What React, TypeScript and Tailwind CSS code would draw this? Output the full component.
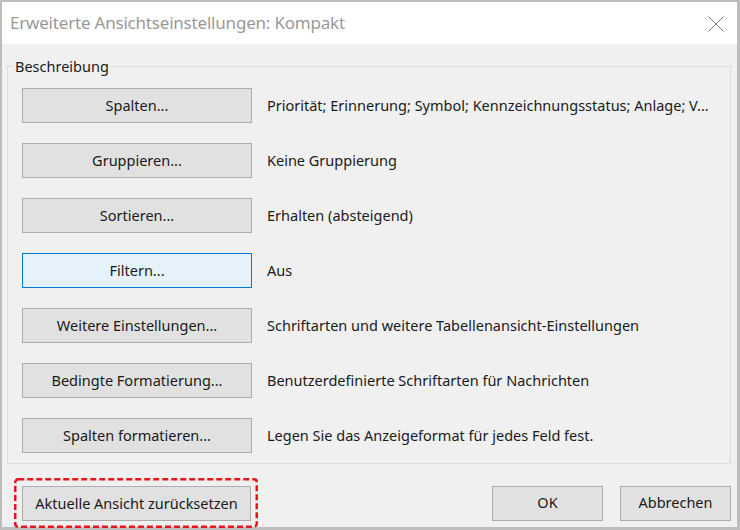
import React from "react";

const rows: [string, string, boolean?][] = [
  ["Spalten...", "Priorität; Erinnerung; Symbol; Kennzeichnungsstatus; Anlage; V..."],
  ["Gruppieren...", "Keine Gruppierung"],
  ["Sortieren...", "Erhalten (absteigend)"],
  ["Filtern...", "Aus", true],
  ["Weitere Einstellungen...", "Schriftarten und weitere Tabellenansicht-Einstellungen"],
  ["Bedingte Formatierung...", "Benutzerdefinierte Schriftarten für Nachrichten"],
  ["Spalten formatieren...", "Legen Sie das Anzeigeformat für jedes Feld fest."],
];

function Btn({ label, hot, w }: { label: string; hot?: boolean; w: string }) {
  return (
    <div
      className={`${w} h-[35px] flex items-center justify-center border text-[14.5px] text-[#1a1a1a] ${
        hot ? "bg-[#e5f1fb] border-[#0078d7]" : "bg-[#e1e1e1] border-[#adadad]"
      }`}
    >
      {label}
    </div>
  );
}

export default function App() {
  return (
    <div
      className="w-[740px] h-[530px] bg-[#bdbdbd] pt-[2px] pl-[2px] pr-[3px] pb-[3px]"
      style={{ fontFamily: '"Noto Sans", "Open Sans", sans-serif' }}
    >
      <div className="w-full h-full flex flex-col bg-[#f0f0f0]">
        <div className="h-[42px] bg-white flex items-center justify-between pl-[8px] pr-[13px] shrink-0">
          <span className="text-[17px] text-[#999999] tracking-[-0.2px]">
            Erweiterte Ansichtseinstellungen: Kompakt
          </span>
          <svg width="16" height="16" viewBox="0 0 16 16" className="mt-[1px]">
            <path d="M0.5 0.5 L15.5 15.5 M15.5 0.5 L0.5 15.5" stroke="#7a7a7a" strokeWidth="1" fill="none" />
          </svg>
        </div>
        <div className="pl-[5px] pr-[6px] pt-[13px]">
          <fieldset className="border border-[#dcdcdc] p-0 m-0">
            <legend className="ml-[6px] px-[1px] text-[14.5px] text-[#1a1a1a] leading-[18px]">Beschreibung</legend>
            <div className="flex flex-col gap-[20px] pl-[14px] pr-[10px] pt-[13px] pb-[10px]">
              {rows.map(([b, d, hot]) => (
                <div key={b} className="flex items-center">
                  <Btn label={b} hot={hot} w="w-[230px]" />
                  <span className="ml-[15px] text-[14.5px] text-[#1a1a1a] whitespace-nowrap">{d}</span>
                </div>
              ))}
            </div>
          </fieldset>
        </div>
        <div className="flex items-center justify-between pl-[12px] pr-[6px] mt-[14px]">
          <div className="relative pl-[8px] pr-[7px] pt-[8px] pb-[7px]">
            <Btn label="Aktuelle Ansicht zurücksetzen" w="w-[229px]" />
            <svg className="absolute inset-0 w-full h-full pointer-events-none" width="244" height="50">
              <rect
                x="1.25"
                y="1.25"
                width="241.5"
                height="47.5"
                rx="3"
                fill="none"
                stroke="#e8141b"
                strokeWidth="2.5"
                strokeDasharray="6 3"
              />
            </svg>
          </div>
          <div className="flex gap-[17px]">
            <Btn label="OK" w="w-[111px]" />
            <Btn label="Abbrechen" w="w-[111px]" />
          </div>
        </div>
      </div>
    </div>
  );
}
